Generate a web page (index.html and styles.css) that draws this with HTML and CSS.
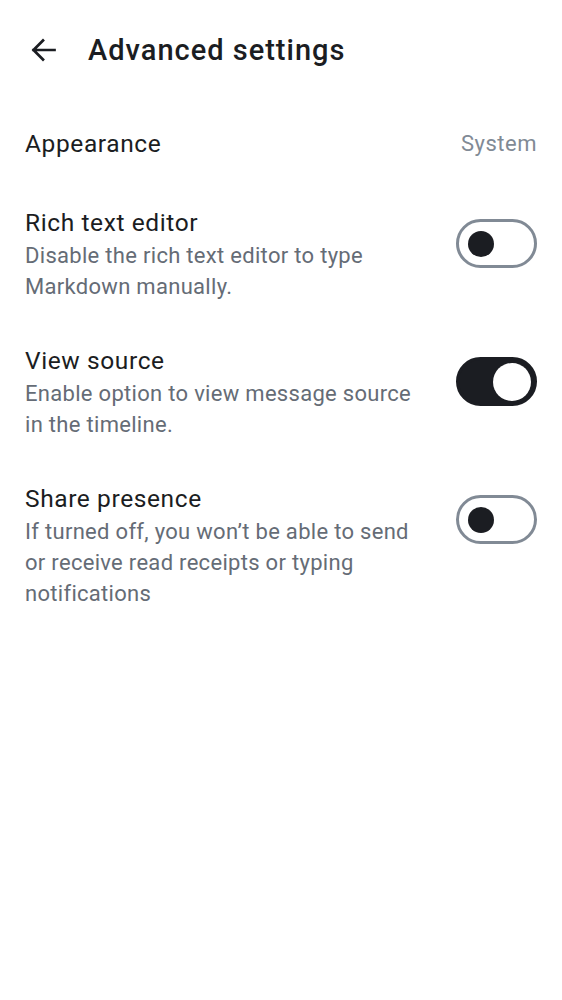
FILE: index.html
```html
<!DOCTYPE html>
<html>
<head>
<meta charset="utf-8">
<link rel="stylesheet" href="styles.css">
</head>
<body>
<header class="topbar">
  <svg class="back" width="26" height="26" viewBox="0 0 26 26" aria-hidden="true">
    <path d="M24.5 13H3.5M13 3.5L3.5 13L13 22.5" fill="none" stroke="#1b1d22" stroke-width="2.7" stroke-linecap="square" stroke-linejoin="miter"/>
  </svg>
  <h1 class="title">Advanced settings</h1>
</header>
<main class="list">
  <div class="row row-appearance">
    <div class="row-title">Appearance</div>
    <div class="row-value">System</div>
  </div>
  <div class="row">
    <div class="text">
      <div class="row-title">Rich text editor</div>
      <div class="row-sub">Disable the rich text editor to type Markdown manually.</div>
    </div>
    <div class="switch"><span class="knob"></span></div>
  </div>
  <div class="row">
    <div class="text">
      <div class="row-title">View source</div>
      <div class="row-sub">Enable option to view message source in the timeline.</div>
    </div>
    <div class="switch on"><span class="knob"></span></div>
  </div>
  <div class="row">
    <div class="text">
      <div class="row-title">Share presence</div>
      <div class="row-sub">If turned off, you won’t be able to send<br>or receive read receipts or typing notifications</div>
    </div>
    <div class="switch"><span class="knob"></span></div>
  </div>
</main>
</body>
</html>
```
FILE: styles.css
```css
html, body {
  margin: 0;
  padding: 0;
  background: #ffffff;
  font-family: Roboto, "Noto Sans", sans-serif;
  color: #1b1d22;
}
.topbar {
  height: 100px;
  display: flex;
  align-items: center;
  padding-left: 30px;
  box-sizing: border-box;
}
.back {
  display: block;
  flex: none;
}
.title {
  margin: 0 0 0 32px;
  font-size: 29px;
  font-weight: 500;
  letter-spacing: 1px;
  line-height: 36px;
  color: #1b1d22;
}
.list {
  padding-top: 6px;
}
.row {
  display: flex;
  align-items: flex-start;
  padding: 20px 25px 21px;
  gap: 30px;
}
.row-appearance {
  align-items: center;
  justify-content: space-between;
  padding-bottom: 24px;
}
.text {
  flex: 1;
  min-width: 0;
}
.row-title {
  font-size: 24.5px;
  letter-spacing: 0.6px;
  line-height: 35px;
  color: #1b1d22;
}
.row-value {
  font-size: 22px;
  letter-spacing: 0.5px;
  line-height: 35px;
  color: #818a95;
}
.row-sub {
  font-size: 22px;
  letter-spacing: 0.3px;
  line-height: 31px;
  color: #656c76;
}
.switch {
  flex: none;
  width: 81px;
  height: 49px;
  margin-top: 14px;
  box-sizing: border-box;
  border: 3px solid #818a95;
  border-radius: 25px;
  display: flex;
  align-items: center;
  padding-left: 9px;
}
.knob {
  width: 26px;
  height: 26px;
  border-radius: 50%;
  background: #1b1d22;
}
.switch.on {
  background: #1b1d22;
  border-color: #1b1d22;
  justify-content: flex-end;
  padding-left: 0;
  padding-right: 3px;
}
.switch.on .knob {
  width: 38px;
  height: 38px;
  background: #ffffff;
}
```
